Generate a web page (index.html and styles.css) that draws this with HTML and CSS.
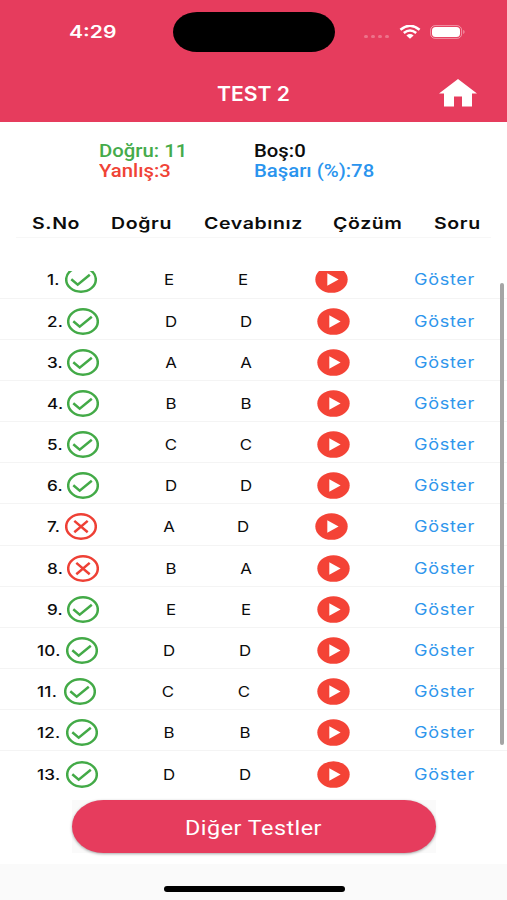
FILE: index.html
```html
<!DOCTYPE html>
<html lang="tr">
<head>
<meta charset="utf-8">
<title>Test 2</title>
<link rel="stylesheet" href="styles.css">
</head>
<body>
<svg class="defs" aria-hidden="true">
  <symbol id="ok" viewBox="0 0 32 27"><ellipse cx="16" cy="13.5" rx="14.8" ry="12.2"/><path d="M6.3 13.2 12.7 18.6 24.8 8.7"/></symbol>
  <symbol id="bad" viewBox="0 0 32 27"><ellipse cx="16" cy="13.5" rx="14.8" ry="12.2"/><path d="M9.3 7.9 22.7 19.3M22.7 7.9 9.3 19.3"/></symbol>
  <symbol id="play" viewBox="0 0 33 27"><ellipse cx="16.5" cy="13.5" rx="16.2" ry="13.3"/><path class="tri" d="M12.3 7.3 23.6 13.5 12.3 19.7Z"/></symbol>
</svg>
<header class="top">
  <div class="status">
    <span class="clock"><b>4:29</b></span>
    <div class="island"></div>
    <div class="signals">
      <div class="dots"><i></i><i></i><i></i><i></i></div>
      <svg class="wifi" viewBox="0 0 22 14"><path d="M1.4 4.7Q11-3.1 20.6 4.7M4.8 8Q11 3 17.2 8"/><path class="dot" d="M7.4 10.4Q11 7.7 14.6 10.4L11 13.8Z"/></svg>
      <svg class="battery" viewBox="0 0 36 14"><rect class="shell" x=".6" y=".6" width="31" height="12.8" rx="4.5"/><rect x="2" y="2" width="28" height="10" rx="3.5"/><path class="cap" d="M33.3 4.8Q35.8 7 33.3 9.2Z"/></svg>
    </div>
  </div>
  <div class="bar">
    <h1><span>TEST 2</span></h1>
    <svg class="home" viewBox="0 0 38 28"><path d="M19 0 38 14.5H33V27.5H23V17.5H15V27.5H5V14.5H0Z"/></svg>
  </div>
</header>
<main>
  <section class="summary">
    <div class="left"><p class="green"><span>Doğru: 11</span></p><p class="red"><span>Yanlış:3</span></p></div>
    <div><p><span>Boş:0</span></p><p class="blue"><span>Başarı (%):78</span></p></div>
  </section>
  <div class="heads"><span>S.No</span><span>Doğru</span><span>Cevabınız</span><span>Çözüm</span><span>Soru</span></div>
  <div class="list">
    <div class="rows">
      <div class="row"><span class="no">1.</span><svg class="mark"><use href="#ok"/></svg><span class="ans">E</span><span class="ans">E</span><svg class="play"><use href="#play"/></svg><a>Göster</a></div>
      <div class="row"><span class="no">2.</span><svg class="mark"><use href="#ok"/></svg><span class="ans">D</span><span class="ans">D</span><svg class="play"><use href="#play"/></svg><a>Göster</a></div>
      <div class="row"><span class="no">3.</span><svg class="mark"><use href="#ok"/></svg><span class="ans">A</span><span class="ans">A</span><svg class="play"><use href="#play"/></svg><a>Göster</a></div>
      <div class="row"><span class="no">4.</span><svg class="mark"><use href="#ok"/></svg><span class="ans">B</span><span class="ans">B</span><svg class="play"><use href="#play"/></svg><a>Göster</a></div>
      <div class="row"><span class="no">5.</span><svg class="mark"><use href="#ok"/></svg><span class="ans">C</span><span class="ans">C</span><svg class="play"><use href="#play"/></svg><a>Göster</a></div>
      <div class="row"><span class="no">6.</span><svg class="mark"><use href="#ok"/></svg><span class="ans">D</span><span class="ans">D</span><svg class="play"><use href="#play"/></svg><a>Göster</a></div>
      <div class="row"><span class="no">7.</span><svg class="mark wrong"><use href="#bad"/></svg><span class="ans">A</span><span class="ans">D</span><svg class="play"><use href="#play"/></svg><a>Göster</a></div>
      <div class="row"><span class="no">8.</span><svg class="mark wrong"><use href="#bad"/></svg><span class="ans">B</span><span class="ans">A</span><svg class="play"><use href="#play"/></svg><a>Göster</a></div>
      <div class="row"><span class="no">9.</span><svg class="mark"><use href="#ok"/></svg><span class="ans">E</span><span class="ans">E</span><svg class="play"><use href="#play"/></svg><a>Göster</a></div>
      <div class="row"><span class="no">10.</span><svg class="mark"><use href="#ok"/></svg><span class="ans">D</span><span class="ans">D</span><svg class="play"><use href="#play"/></svg><a>Göster</a></div>
      <div class="row"><span class="no">11.</span><svg class="mark"><use href="#ok"/></svg><span class="ans">C</span><span class="ans">C</span><svg class="play"><use href="#play"/></svg><a>Göster</a></div>
      <div class="row"><span class="no">12.</span><svg class="mark"><use href="#ok"/></svg><span class="ans">B</span><span class="ans">B</span><svg class="play"><use href="#play"/></svg><a>Göster</a></div>
      <div class="row"><span class="no">13.</span><svg class="mark"><use href="#ok"/></svg><span class="ans">D</span><span class="ans">D</span><svg class="play"><use href="#play"/></svg><a>Göster</a></div>
    </div>
    <div class="scrollbar"></div>
  </div>
  <div class="action"><button><span>Diğer Testler</span></button></div>
</main>
<footer><div class="indicator"></div></footer>
</body>
</html>
```

FILE: styles.css
```css
* { box-sizing: border-box; }
body { margin: 0; width: 507px; height: 900px; overflow: hidden; background: #fff; color: #0c0c0c; font-family: Inter, "Liberation Sans", sans-serif; display: flex; flex-direction: column; }
.defs { position: absolute; width: 0; height: 0; }
p, h1 { margin: 0; }
.top { height: 122px; background: #e63c5d; color: #fff; flex: none; }
.status { height: 64px; display: grid; grid-template-columns: 173px 162px 1fr; align-items: center; }
.clock { padding-left: 69px; font-size: 17px; }
.clock b { display: inline-block; font-weight: 600; transform: scaleX(1.24); transform-origin: left; }
.island { height: 40px; border-radius: 24px / 20px; background: #000; }
.signals { display: flex; align-items: center; padding-left: 29px; }
.dots { display: flex; gap: 3px; width: 34.5px; margin-top: 9px; }
.dots i { width: 4px; height: 3px; border-radius: 2px; background: rgba(255,255,255,.28); }
.wifi { width: 22px; height: 14px; fill: none; stroke: #fff; stroke-width: 2.5; }
.wifi .dot { fill: #fff; stroke: none; }
.battery { width: 36px; height: 14px; margin-left: 9px; fill: #fff; }
.battery .shell { fill: none; stroke: rgba(255,255,255,.45); }
.battery .cap { fill: rgba(255,255,255,.5); }
.bar { height: 58px; display: grid; grid-template-columns: 439px 38px; align-items: center; }
h1 { padding-left: 217px; font-size: 19.5px; font-weight: 600; line-height: 24px; padding-top: 1px; }
h1 span { display: inline-block; transform: scaleX(1.085); transform-origin: left; }
.home { width: 38px; height: 28px; fill: #fff; margin-top: -1px; }
main { height: 742px; flex: none; display: flex; flex-direction: column; }
.summary { display: grid; grid-template-columns: 155px 1fr; padding: 19px 0 0 99px; height: 80px; flex: none; font: 500 17.5px/20px Roboto, sans-serif; }
.summary span { display: inline-block; transform: scaleX(1.16); transform-origin: left; }
.green { color: #45ab4b; }
.red { color: #f04336; }
.blue { color: #2a94ee; }
.heads { display: grid; grid-template-columns: 79px 93px 129px 101px 1fr; margin: 0 16px; padding-left: 16px; height: 36px; line-height: 42px; font-size: 16px; font-weight: 600; border-bottom: 1px solid #f7f7f7; flex: none; }
.heads span { justify-self: start; transform: scaleX(1.22); transform-origin: left; letter-spacing: .5px; }
.list { margin-top: 32.5px; height: 524px; flex: none; overflow: hidden; position: relative; }
.rows { margin-top: -13px; }
.row { --num: 47px; --x: 67px; --a: 170.5px; --b: 245.5px; --p: 333.3px; display: grid; grid-template-columns: var(--x) calc(var(--a) - var(--x) - 10px) calc(var(--b) - var(--a)) calc(var(--p) - var(--b) - 6.5px) calc(414px - var(--p) + 16.5px) 1fr; align-items: center; height: 41.17px; padding-top: 4.8px; border-bottom: 1px solid #f4f4f4; font-size: 14.5px; }
.row:nth-child(1), .row:nth-child(7) { --x: 65.2px; --a: 168.7px; --b: 243.5px; --p: 332px; }
.row:nth-child(n+10) { --num: 37px; --x: 66px; --a: 169.3px; --b: 244.7px; --p: 333.3px; }
.row:nth-child(11) { --x: 63.7px; --a: 167.7px; --b: 243.7px; }
.row:last-child { border-bottom: 0; }
.no { padding-left: var(--num); font-weight: 500; white-space: nowrap; transform: scaleX(1.18); transform-origin: var(--num) 50%; letter-spacing: .2px; }
.mark { width: 32px; height: 27px; fill: none; stroke: #43aa47; stroke-width: 2.5; }
.wrong { stroke: #ee4035; }
.ans { width: 20px; text-align: center; transform: scaleX(1.16); }
.play { width: 33px; height: 27px; fill: #f44336; }
.tri { fill: #fff; }
.row a { justify-self: start; color: #2e96ec; font-size: 15.5px; letter-spacing: .6px; transform: scaleX(1.165); transform-origin: left; }
.scrollbar { position: absolute; right: 3px; top: 12.5px; width: 4.5px; height: 462px; border-radius: 2px; background: #a5a5a5; }
.action { margin: 5.5px 0 0 72px; width: 364px; height: 53px; background: #fafafa; flex: none; }
button { display: block; width: 100%; height: 53px; border: 0; border-radius: 32px / 27px; background: #e63c5d; color: #fff; font: 400 20px/24px Roboto, sans-serif; box-shadow: 0 1px 3px rgba(0,0,0,.35); padding: 2px 0 0; }
button span { display: inline-block; letter-spacing: .4px; transform: scaleX(1.17); }
footer { height: 36px; background: #fafafa; padding-top: 22px; flex: none; }
.indicator { width: 181px; height: 6px; margin-left: 164px; border-radius: 3px; background: #000; }
```
